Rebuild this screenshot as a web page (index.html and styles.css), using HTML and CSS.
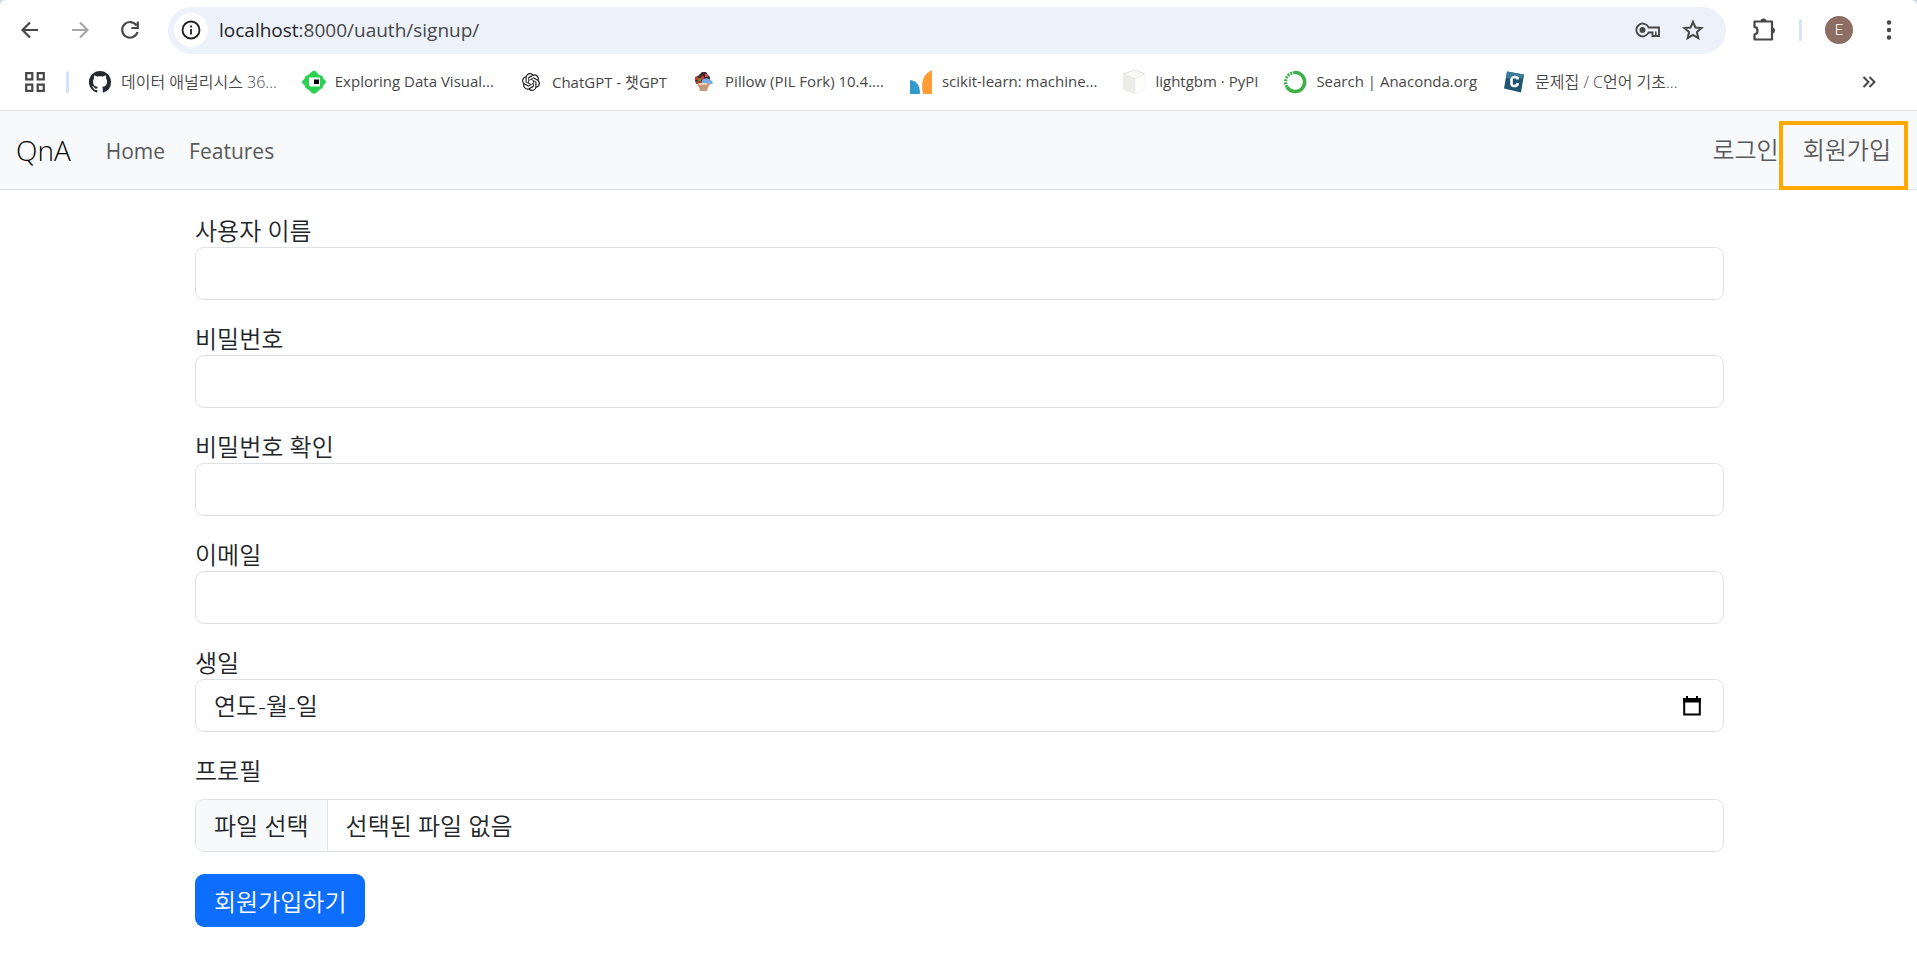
FILE: index.html
```html
<!DOCTYPE html>
<html lang="ko">
<head>
    <meta charset="UTF-8">
    <meta name="viewport" content="width=device-width, initial-scale=1.0">
    <title>회원가입</title>
    <link rel="stylesheet" href="styles.css">
</head>
<body>
    <div class="browser">
        <div class="toolbar">
            <button type="button" class="tool" aria-label="Back">
                <svg width="24" height="24" viewBox="0 0 24 24"><path d="M20 12H5M12 4.500L4.500 12l7.500 7.500" fill="none" stroke="#474747" stroke-width="2.200"/></svg>
            </button>
            <button type="button" class="tool" aria-label="Forward">
                <svg width="24" height="24" viewBox="0 0 24 24"><path d="M4 12h15M12 4.500l7.500 7.500-7.500 7.500" fill="none" stroke="#a8a8a8" stroke-width="2.200"/></svg>
            </button>
            <button type="button" class="tool" aria-label="Reload">
                <svg width="24" height="24" viewBox="0 0 24 24"><path d="M18.500 7.500A7.800 7.800 0 1 0 19.500 14M19.800 3.500v6.500h-6.500" fill="none" stroke="#474747" stroke-width="2.200"/></svg>
            </button>
            <div class="address">
                <button type="button" class="site-info" aria-label="Site information">
                    <svg width="20" height="20" viewBox="0 0 20 20"><circle cx="10" cy="10" r="8.500" fill="none" stroke="#1f1f1f" stroke-width="1.800"/><path d="M10 9v5.500M10 5.500v2" stroke="#1f1f1f" stroke-width="1.800"/></svg>
                </button>
                <span class="url"><span class="host">localhost</span>:8000/uauth/signup/</span>
                <svg class="key" width="26" height="16" viewBox="0 0 26 16"><path d="M13.600 5.500A6.400 6.400 0 1 0 13.600 10.500H17.500v3.500h6.500V5.500z" fill="none" stroke="#474747" stroke-width="1.900"/><circle cx="7.500" cy="8" r="3" fill="#474747"/><path d="M20.800 14V9.500" stroke="#474747" stroke-width="1.500"/></svg>
                <svg width="22" height="22" viewBox="0 0 22 22"><path d="M11 2.800l2.400 5.700 6.200.5-4.700 4.100 1.400 6-5.300-3.200-5.300 3.200 1.400-6L2.400 9l6.200-.5z" fill="none" stroke="#474747" stroke-width="2"/></svg>
            </div>
            <button type="button" class="tool extensions" aria-label="Extensions">
                <svg width="24" height="24" viewBox="0 0 24 24"><path d="M2.500 3.500h17.500v18H2.500v-5q3-.5 3-3.800t-3-3.800z" fill="none" stroke="#474747" stroke-width="2.200" stroke-linejoin="round"/><path d="M8.500 3.500a3 3 0 0 1 6 0zM20 9.500a3 3 0 0 1 0 6z" fill="#474747"/></svg>
            </button>
            <span class="divider"></span>
            <button type="button" class="avatar" aria-label="Profile">E</button>
            <button type="button" class="tool menu" aria-label="Menu">
                <svg width="6" height="22" viewBox="0 0 6 22"><g fill="#474747"><circle cx="3" cy="3.500" r="2.200"/><circle cx="3" cy="11" r="2.200"/><circle cx="3" cy="18.500" r="2.200"/></g></svg>
            </button>
        </div>
        <div class="bookmarks">
            <svg class="apps" width="20" height="20" viewBox="0 0 20 20"><path d="M1.200 1.200h6.100v6.100H1.200zM12.700 1.200h6.100v6.100h-6.100zM1.200 12.700h6.100v6.100H1.200zM12.700 12.700h6.100v6.100h-6.100z" fill="none" stroke="#474747" stroke-width="2.200"/></svg>
            <span class="divider"></span>
            <a class="bookmark korean" href="#">
                <svg width="24" height="24" viewBox="-.7 -.7 17.400 17.400"><path fill="#24292f" d="M8 0C3.580 0 0 3.580 0 8c0 3.540 2.290 6.530 5.470 7.590.4.070.55-.17.55-.38 0-.19-.01-.82-.01-1.490-2.010.37-2.530-.49-2.690-.94-.09-.23-.48-.94-.82-1.130-.28-.15-.68-.52-.01-.53.63-.01 1.080.58 1.230.82.72 1.210 1.870.87 2.330.66.07-.52.28-.87.51-1.070-1.780-.2-3.640-.89-3.640-3.950 0-.87.31-1.590.82-2.150-.08-.2-.36-1.020.08-2.120 0 0 .67-.21 2.200.82.64-.18 1.320-.27 2-.27s1.360.09 2 .27c1.530-1.040 2.200-.82 2.200-.82.44 1.100.16 1.920.08 2.120.51.56.82 1.270.82 2.150 0 3.070-1.870 3.750-3.650 3.950.29.25.54.73.54 1.480 0 1.070-.01 1.930-.01 2.200 0 .21.15.46.55.38A8.010 8.010 0 0 0 16 8c0-4.420-3.580-8-8-8z"/></svg>
                <span>데이터 애널리시스 36...</span>
            </a>
            <a class="bookmark" href="#">
                <svg width="24" height="24" viewBox="0 0 24 24"><path d="M10 1.500q2-1.500 4 0l2 2.500q.6.800 1.800 1l2.700 1 1 2.700 2 2q1 1.300 0 2.600l-2 2-1 2.700-2.700 1.500-3.800 3.500q-2 1.500-4 0l-3.800-3.500-2.700-1.500-1-2.700-2-2q-1-1.300 0-2.600l2-2 1-2.700 2.700-1z" fill="#2ad153"/><path d="M7 7.500h11v9H9q-2 0-2-2z" fill="#fff"/><path d="M12 9.500h5v4.500h-5z" fill="#000"/></svg>
                <span>Exploring Data Visual...</span>
            </a>
            <a class="bookmark" href="#">
                <svg width="24" height="24" viewBox="-4 -4 32 32"><path fill="#222" d="M22.282 9.821a5.985 5.985 0 0 0-.516-4.911 6.046 6.046 0 0 0-6.510-2.900A6.065 6.065 0 0 0 4.981 4.182a5.985 5.985 0 0 0-3.998 2.900 6.046 6.046 0 0 0 .743 7.097 5.980 5.980 0 0 0 .511 4.911 6.051 6.051 0 0 0 6.515 2.900A5.985 5.985 0 0 0 13.260 24a6.056 6.056 0 0 0 5.772-4.206 5.989 5.989 0 0 0 3.998-2.900 6.056 6.056 0 0 0-.748-7.073zM13.260 22.429a4.476 4.476 0 0 1-2.876-1.041l.142-.080 4.778-2.758a.795.795 0 0 0 .393-.681v-6.737l2.020 1.169a.071.071 0 0 1 .038.052v5.583a4.504 4.504 0 0 1-4.495 4.494zM3.599 18.304a4.471 4.471 0 0 1-.535-3.014l.142.085 4.783 2.758a.771.771 0 0 0 .781 0l5.843-3.369v2.332a.080.080 0 0 1-.033.062L9.740 19.950a4.499 4.499 0 0 1-6.141-1.646zM2.341 7.896a4.485 4.485 0 0 1 2.366-1.973V11.600a.766.766 0 0 0 .388.677l5.814 3.354-2.020 1.169a.076.076 0 0 1-.071 0l-4.830-2.787A4.504 4.504 0 0 1 2.341 7.872zM18.937 11.751L13.104 8.364 15.119 7.200a.076.076 0 0 1 .071 0l4.830 2.791a4.494 4.494 0 0 1-.677 8.104v-5.677a.790.790 0 0 0-.407-.667zM20.948 8.728l-.142-.085-4.774-2.782a.776.776 0 0 0-.785 0L9.409 9.230V6.897a.066.066 0 0 1 .028-.062l4.830-2.787a4.499 4.499 0 0 1 6.680 4.660zM8.307 12.863l-2.020-1.164a.080.080 0 0 1-.038-.057V6.074a4.499 4.499 0 0 1 7.376-3.454l-.142.081L8.704 5.459a.795.795 0 0 0-.393.681zM9.404 10.498l2.602-1.500 2.607 1.500v2.999l-2.597 1.500-2.607-1.500z"/></svg>
                <span>ChatGPT - 챗GPT</span>
            </a>
            <a class="bookmark" href="#">
                <svg width="24" height="24" viewBox="0 0 24 24"><path d="M8 4l2-2h4l2 3 2 2v4H3V7l3-1z" fill="#3b2b2f"/><path d="M3 7h3v3H3zM9 6h3v4H9z" fill="#c43a2c"/><path d="M6 8h3v3H6z" fill="#6c8a35"/><path d="M13 4h3v3h-3z" fill="#d24a55"/><path d="M10 10q5-4 10 1l1 3H9z" fill="#74ade6"/><path d="M3 11h7v3H4z" fill="#8d4a35"/><path d="M6 13h12q0 3-2 4l-1 4H8l-1-4q-2-1-1-4z" fill="#c99878"/><path d="M7 13h8v2H7z" fill="#f0cdb5"/></svg>
                <span>Pillow (PIL Fork) 10.4....</span>
            </a>
            <a class="bookmark" href="#">
                <svg width="24" height="24" viewBox="0 0 24 24"><path d="M1 10q10 1 10 14H1z" fill="#3499cd"/><path d="M23 0v24H14Q10 6 23 0z" fill="#ff9c34"/></svg>
                <span>scikit-learn: machine...</span>
            </a>
            <a class="bookmark" href="#">
                <svg width="24" height="24" viewBox="0 0 24 24"><path d="M1 4l12-4 10 4-10 5z" fill="#f8f8f5" stroke="#deded9"/><path d="M1 4l12 5v15L1 20z" fill="#ecece8"/><path d="M13 9l10-5v15l-10 5z" fill="#fdfdfc" stroke="#eee" stroke-width=".5"/></svg>
                <span>lightgbm · PyPI</span>
            </a>
            <a class="bookmark" href="#">
                <svg width="24" height="24" viewBox="0 0 24 24"><path d="M12 2.500a9.500 9.500 0 1 1-8 14.500" fill="none" stroke="#3eb049" stroke-width="3.600"/><path d="M4 17A9.500 9.500 0 0 1 12 2.500" fill="none" stroke="#3eb049" stroke-width="3.200" stroke-dasharray="2 1"/></svg>
                <span>Search | Anaconda.org</span>
            </a>
            <a class="bookmark korean" href="#">
                <svg width="24" height="24" viewBox="0 0 24 24"><path d="M5 1.500l17 3-3 18-17-4z" fill="#1f5570"/><path d="M5 1.500l17 3-.7 4L4 8z" fill="#3d7c99"/><path d="M15.500 9.500V8q-1-1-3-1t-3 2v4.500q0 2.500 2.500 2.500 3 0 3.500-1.500V13" fill="none" stroke="#fff" stroke-width="2.600"/></svg>
                <span>문제집 / C언어 기초...</span>
            </a>
            <button type="button" class="tool more" aria-label="More bookmarks">
                <svg width="14" height="12" viewBox="0 0 14 12"><path d="M1.500 1l5 5-5 5M7.500 1l5 5-5 5" fill="none" stroke="#474747" stroke-width="2"/></svg>
            </button>
        </div>
    </div>

    <nav class="navbar">
        <a class="brand" href="#">QnA</a>
        <a class="nav-link" href="#">Home</a>
        <a class="nav-link" href="#">Features</a>
        <a class="nav-link login" href="#">로그인</a>
        <a class="nav-link signup" href="#">회원가입</a>
    </nav>

    <form class="container">
        <div class="field">
            <label for="username">사용자 이름</label>
            <input class="control" type="text" id="username" name="username">
        </div>
        <div class="field">
            <label for="password1">비밀번호</label>
            <input class="control" type="password" id="password1" name="password1">
        </div>
        <div class="field">
            <label for="password2">비밀번호 확인</label>
            <input class="control" type="password" id="password2" name="password2">
        </div>
        <div class="field">
            <label for="email">이메일</label>
            <input class="control" type="email" id="email" name="email">
        </div>
        <div class="field">
            <label for="birthday">생일</label>
            <div class="control date">
                <input type="text" id="birthday" name="birthday" placeholder="연도-월-일">
                <button type="button" class="tool" aria-label="달력">
                    <svg width="18" height="20" viewBox="0 0 18 20"><path d="M1.200 3h15.600v15.400H1.200z" fill="none" stroke="#000" stroke-width="2"/><path d="M0 2h18v4.500H0zM3 0h2v3H3zM13 0h2v3h-2z"/></svg>
                </button>
            </div>
        </div>
        <div class="field">
            <label for="profile" class="form-label">프로필</label>
            <label class="control file">
                <input type="file" id="profile" name="profile">
                <span class="file-button">파일 선택</span>
                <span class="file-name">선택된 파일 없음</span>
            </label>
        </div>
        <button type="submit" class="submit">회원가입하기</button>
    </form>
</body>
</html>
```
FILE: styles.css
```css
* {
    box-sizing: border-box;
}
body {
    margin: 0;
    font-family: "Open Sans", "Noto Sans CJK KR", sans-serif;
    font-size: 24px;
    font-weight: 350;
    color: #212529;
    background: #fff;
}
a {
    text-decoration: none;
    color: inherit;
}
button, input {
    font: inherit;
    color: inherit;
}
svg {
    display: block;
    flex: none;
}

/* browser window */
.browser {
    background: linear-gradient(#d3dbe5 12px, #fff 12px);
    border-bottom: 1px solid #dfe1e3;
    color: #474747;
}
.toolbar {
    display: flex;
    align-items: center;
    height: 60px;
    padding: 0 25px 0 18px;
    background: #fff;
    border-radius: 6px 6px 0 0;
}
.tool {
    padding: 0;
    margin-right: 26px;
    border: none;
    background: none;
}
.address {
    display: flex;
    align-items: center;
    flex: 1;
    height: 47px;
    padding: 0 22px 0 6px;
    border-radius: 24px;
    background: #ecf1fa;
}
.site-info {
    display: flex;
    align-items: center;
    justify-content: center;
    width: 34px;
    height: 34px;
    padding: 0;
    margin-right: 11px;
    border: none;
    border-radius: 50%;
    background: #fff;
}
.url {
    flex: 1;
    font-size: 19px;
    font-weight: 400;
}
.host {
    color: #1f1f1f;
}
.key {
    margin-right: 21px;
}
.extensions {
    margin: 0 23px 0 26px;
}
.divider {
    width: 3px;
    height: 22px;
    border-radius: 2px;
    background: #d3e3fd;
}
.avatar {
    width: 28px;
    height: 28px;
    padding: 0;
    margin: 0 33px 0 23px;
    border: none;
    border-radius: 50%;
    background: #8d6e63;
    color: #fff;
    font-family: Roboto, sans-serif;
    font-size: 15px;
}
.menu {
    margin: 0;
}
.bookmarks {
    display: flex;
    align-items: center;
    height: 50px;
    padding: 0 41px 6px 25px;
    font-size: 15px;
    font-weight: 400;
}
.apps {
    margin-right: 21px;
}
.bookmarks .divider {
    margin-right: 19px;
}
.bookmark {
    display: flex;
    align-items: center;
    gap: 9px;
    margin-right: 25px;
    white-space: nowrap;
}
.bookmark span {
    padding-bottom: 2px;
}
.korean {
    font-size: 16px;
    font-weight: 350;
}
.more {
    margin: 0 0 0 auto;
}

/* navbar */
.navbar {
    display: flex;
    align-items: center;
    height: 79px;
    padding: 0 9px 0 16px;
    border-bottom: 1px solid #dee2e6;
    background: #f8f9fb;
}
.brand {
    margin-right: 35px;
    font-size: 28px;
    color: #000;
}
.nav-link {
    padding-top: 2px;
    margin-right: 24px;
    font-size: 21px;
    font-weight: 400;
    color: #58595b;
}
.login, .signup {
    font-size: 24px;
    font-weight: 350;
    line-height: 36px;
}
.login {
    padding: 0;
    margin: 0 0 0 auto;
}
.signup {
    align-self: flex-end;
    padding: 7px 13px 18px 20px;
    margin: 0 0 -1px;
    border: 4px solid #ffa800;
}

/* sign up form */
.container {
    padding-top: 24px;
    margin: 0 193px 0 195px;
}
.field {
    display: flex;
    flex-direction: column;
    margin-bottom: 22px;
    line-height: 33px;
}
.form-label {
    margin-bottom: 12px;
}
.control {
    width: 100%;
    height: 53px;
    padding: 0 18px;
    border: 1px solid #dee2e6;
    border-radius: 9px;
    background: #fff;
}
.date {
    display: flex;
    align-items: center;
    padding-right: 22px;
}
.date input {
    flex: 1;
    padding: 0;
    border: none;
    outline: none;
}
.date input::placeholder {
    color: #212529;
    opacity: 1;
}
.date .tool {
    margin: 0;
}
.file {
    display: flex;
    padding: 0;
    overflow: hidden;
    line-height: 51px;
}
.file input {
    position: absolute;
    width: 1px;
    height: 1px;
    opacity: 0;
}
.file-button {
    padding: 0 18px;
    border-right: 1px solid #dee2e6;
    background: #f8f9fa;
}
.file-name {
    padding: 0 18px;
}
.submit {
    height: 53px;
    padding: 0 19px;
    border: none;
    border-radius: 9px;
    background: #0d6efd;
    color: #fff;
}
```
